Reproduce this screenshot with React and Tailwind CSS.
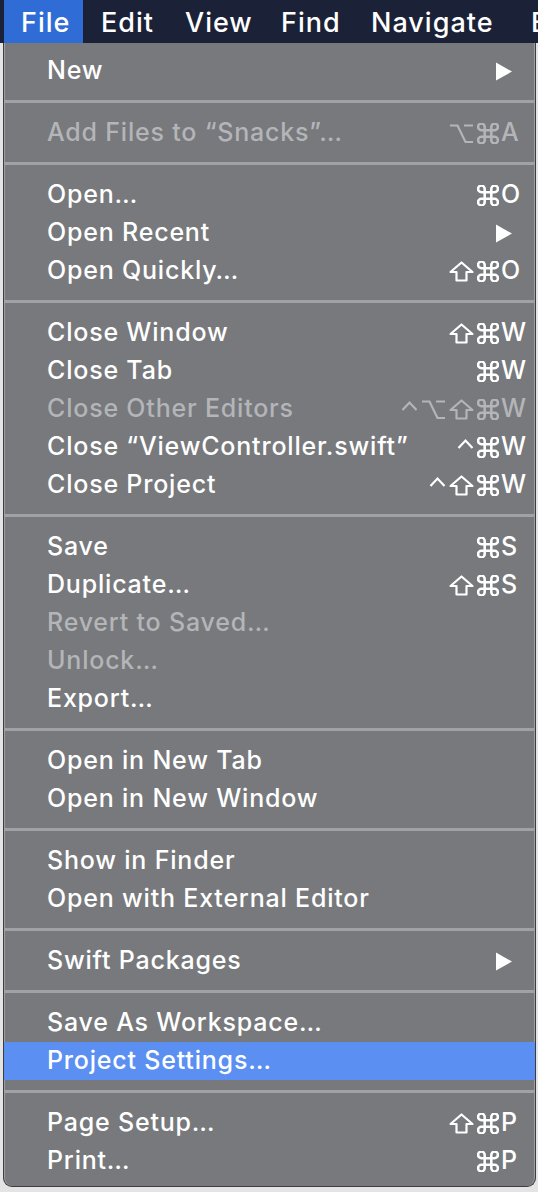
import React from "react"

const sections = [
    [{ label: "New", sub: true }],
    [{ label: "Add Files to “Snacks”…", mods: "alt cmd", k: "A", disabled: true }],
    [
        { label: "Open…", mods: "cmd", k: "O" },
        { label: "Open Recent", sub: true },
        { label: "Open Quickly…", mods: "shift cmd", k: "O" },
    ],
    [
        { label: "Close Window", mods: "shift cmd", k: "W" },
        { label: "Close Tab", mods: "cmd", k: "W" },
        { label: "Close Other Editors", mods: "ctrl alt shift cmd", k: "W", disabled: true },
        { label: "Close “ViewController.swift”", mods: "ctrl cmd", k: "W" },
        { label: "Close Project", mods: "ctrl shift cmd", k: "W" },
    ],
    [
        { label: "Save", mods: "cmd", k: "S" },
        { label: "Duplicate…", mods: "shift cmd", k: "S" },
        { label: "Revert to Saved…", disabled: true },
        { label: "Unlock…", disabled: true },
        { label: "Export…" },
    ],
    [{ label: "Open in New Tab" }, { label: "Open in New Window" }],
    [{ label: "Show in Finder" }, { label: "Open with External Editor" }],
    [{ label: "Swift Packages", sub: true }],
    [{ label: "Save As Workspace…" }, { label: "Project Settings…", active: true }],
    [
        { label: "Page Setup…", mods: "shift cmd", k: "P" },
        { label: "Print…", mods: "cmd", k: "P" },
    ],
]

// modifier glyphs drawn by hand, the fonts here don't have good ones
function Mod({ name }) {
    if (name === "cmd")
        return (
            <svg width="22" height="21" viewBox="2.5 2.5 19 19" fill="none" stroke="currentColor" strokeWidth="2.3">
                <path d="M15 6v12a3 3 0 1 0 3-3H6a3 3 0 1 0 3 3V6a3 3 0 1 0-3 3h12a3 3 0 1 0-3-3" />
            </svg>
        )
    if (name === "shift")
        return (
            <svg width="25" height="21" viewBox="0 0 25 21" fill="none" stroke="currentColor" strokeWidth="2.2" strokeLinejoin="round">
                <path d="M12.5 1.5 L23.5 11 H17.5 V19.5 H7.5 V11 H1.5 Z" />
            </svg>
        )
    if (name === "alt")
        return (
            <svg width="25" height="21" viewBox="0 0 25 21" fill="none" stroke="currentColor" strokeWidth="2.2">
                <path d="M1 2.5 H8.5 L16.5 19 H24 M15 2.5 H24" />
            </svg>
        )
    return (
        <svg width="17" height="21" viewBox="0 0 17 21" fill="none" stroke="currentColor" strokeWidth="2.2">
            <path d="M1.5 11 L8.5 3.5 L15.5 11" />
        </svg>
    )
}

function Row({ item }) {
    const color = item.disabled ? "text-[#b3b5b8]" : "text-white"
    return (
        <div className={`flex items-center h-[38px] pl-[43px] pr-[4px] ${item.active ? "bg-[#5b8ff2]" : ""} ${color}`}>
            <span className="flex-1 whitespace-nowrap tracking-[0.8px]">{item.label}</span>
            {item.sub ? (
                <div className="w-[36px]">
                    <svg width="18" height="19" viewBox="0 0 18 19">
                        <path d="M1 0.5 L17 9.5 L1 18.5 Z" fill="white" />
                    </svg>
                </div>
            ) : (
                <>
                    <span className="flex items-center gap-[3px]">
                        {item.mods && item.mods.split(" ").map((m) => <Mod key={m} name={m} />)}
                    </span>
                    <span className="w-[32px] pl-[2px]">{item.k}</span>
                </>
            )}
        </div>
    )
}

function App() {
    return (
        <div className="w-[538px] h-[1192px] overflow-hidden bg-[#e4e4e4] font-['Inter','DejaVu_Sans',sans-serif] font-medium">
            <div className="flex items-stretch h-[43px] bg-[#1b2237] text-white text-[27px] tracking-[1px] whitespace-nowrap overflow-hidden">
                <div className="shrink-0 ml-[4px] w-[79px] bg-[#2f6cd6] flex items-center pl-[17px] pt-[3px]">File</div>
                <span className="shrink-0 ml-[18px] w-[84px] flex items-center pt-[3px]">Edit</span>
                <span className="shrink-0 w-[96px] flex items-center pt-[3px]">View</span>
                <span className="shrink-0 w-[90px] flex items-center pt-[3px]">Find</span>
                <span className="shrink-0 w-[160px] flex items-center pt-[3px]">Navigate</span>
                <span className="shrink-0 flex items-center pt-[3px]">Editor</span>
            </div>
            <div className="ml-[3px] w-[533px] h-[1144px] bg-[#77797c] border border-t-0 border-[#3c3d40] rounded-b-[9px] shadow-[inset_1px_0_0_#9c9ea1,inset_-1px_0_0_#9c9ea1] pt-[9px] text-[25px]">
                {sections.map((sec, i) => (
                    <div key={i}>
                        {i > 0 && (
                            <div className="h-[24px] pt-[10px]">
                                <div className="h-[3px] bg-[#a0a2a5]" />
                            </div>
                        )}
                        {sec.map((item) => (
                            <Row key={item.label} item={item} />
                        ))}
                    </div>
                ))}
            </div>
        </div>
    )
}

export default App
